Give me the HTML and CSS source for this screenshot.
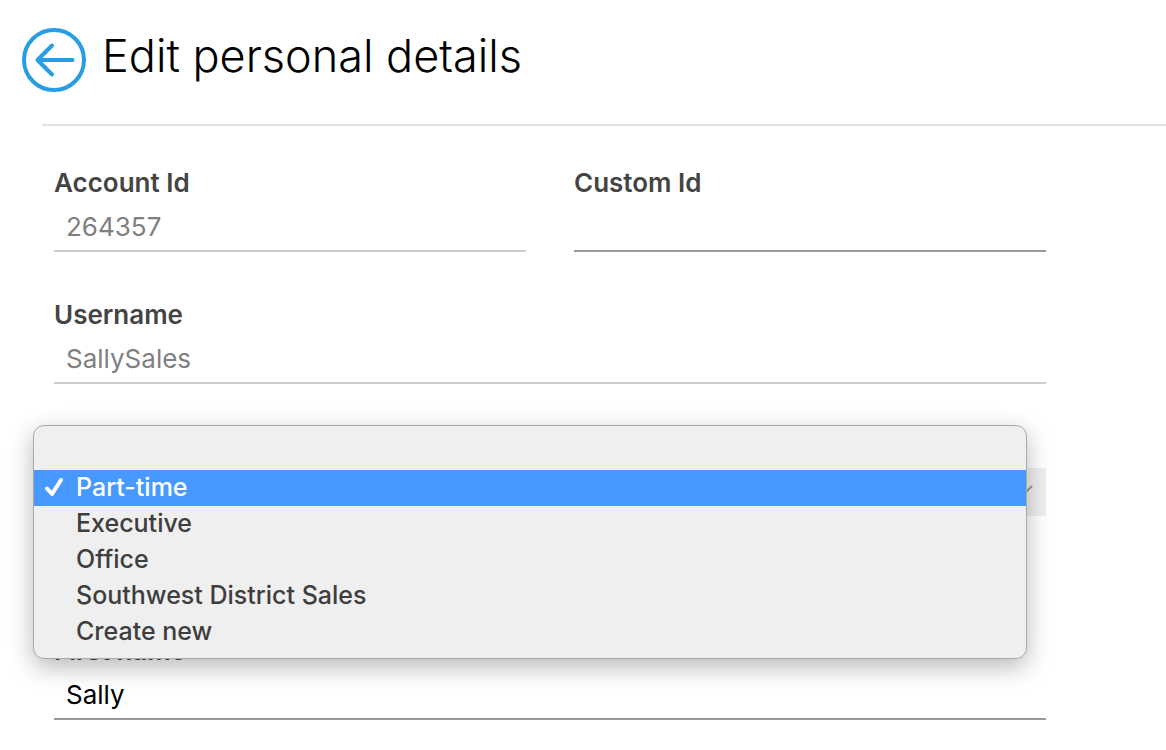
FILE: index.html
```html
<!DOCTYPE html>
<html lang="en">
<head>
<meta charset="utf-8">
<meta name="viewport" content="width=device-width, initial-scale=1">
<title>Edit personal details</title>
<link rel="stylesheet" href="styles.css">
</head>
<body>
<header class="page-header">
  <button class="back" type="button" aria-label="Back">
    <svg class="back-icon" viewBox="0 0 64 64" fill="none" stroke="currentColor" stroke-linecap="round" stroke-linejoin="round" aria-hidden="true">
      <circle cx="32" cy="32" r="30" stroke-width="4"/>
      <path d="M50.500 32H15.500M30 17.500L15.500 32L30 46.500" stroke-width="4"/>
    </svg>
  </button>
  <h1 class="title">Edit personal details</h1>
</header>
<hr class="divider">
<form class="form">
  <div class="field">
    <label class="label" for="account">Account Id</label>
    <input class="input" id="account" type="text" value="264357" disabled>
  </div>
  <div class="field">
    <label class="label" for="custom">Custom Id</label>
    <input class="input" id="custom" type="text">
  </div>
  <div class="field wide">
    <label class="label" for="username">Username</label>
    <input class="input" id="username" type="text" value="SallySales" disabled>
  </div>
  <div class="field wide field-select">
    <select class="select" aria-label="Group">
      <option selected></option>
      <option>Part-time</option>
      <option>Executive</option>
      <option>Office</option>
      <option>Southwest District Sales</option>
      <option>Create new</option>
    </select>
    <svg class="chevron" viewBox="0 0 16 10" fill="none" stroke="currentColor" stroke-width="2" aria-hidden="true"><path d="M2 2L8 8L14 2"/></svg>
    <ul class="menu" role="listbox" aria-label="Group">
      <li class="option" role="option"></li>
      <li class="option selected" role="option" aria-selected="true">
        <svg class="check" viewBox="0 0 20 20" fill="none" stroke="currentColor" stroke-width="4" stroke-linecap="round" stroke-linejoin="round" aria-hidden="true"><path d="M3 11.500L8 17L17 3"/></svg>
        Part-time
      </li>
      <li class="option" role="option">Executive</li>
      <li class="option" role="option">Office</li>
      <li class="option" role="option">Southwest District Sales</li>
      <li class="option" role="option">Create new</li>
    </ul>
  </div>
  <div class="field wide">
    <label class="label" for="first">First name</label>
    <input class="input" id="first" type="text" value="Sally">
  </div>
</form>
</body>
</html>
```
FILE: styles.css
```css
* {
  box-sizing: border-box;
}

body {
  margin: 0;
  background: #fff;
  color: #000;
  font-family: Inter, "Liberation Sans", sans-serif;
  font-size: 26px;
}

.page-header {
  display: flex;
  align-items: center;
  gap: 16px;
  padding: 28px 22px 32px;
}

.back {
  display: block;
  flex: none;
  width: 64px;
  height: 64px;
  padding: 0;
  border: 0;
  border-radius: 50%;
  background: none;
  color: #269de4;
  cursor: pointer;
}

.back-icon {
  display: block;
}

.title {
  margin: 0;
  padding-bottom: 8px;
  font-size: 45px;
  font-weight: 300;
  line-height: 56px;
}

.divider {
  height: 2px;
  margin: 0 0 0 42px;
  border: 0;
  background: #e2e2e2;
}

.form {
  display: grid;
  grid-template-columns: 1fr 1fr;
  gap: 48px;
  padding: 42px 120px 30px 54px;
}

.field {
  display: flex;
  flex-direction: column;
  gap: 6px;
  min-width: 0;
}

.wide {
  grid-column: 1 / -1;
}

.label {
  color: #444;
  font-weight: 600;
  line-height: 30px;
}

.input {
  width: 100%;
  height: 48px;
  padding: 0 12px 2px;
  border: 0;
  border-bottom: 2px solid #999;
  border-radius: 0;
  outline: 0;
  background: none;
  color: #000;
  font: inherit;
}

.input:disabled {
  border-bottom-color: #ccc;
  color: #808080;
}

.field-select {
  position: relative;
  padding-top: 36px;
  margin-bottom: 72px;
}

.select {
  appearance: none;
  width: 100%;
  height: 48px;
  padding: 0 36px 0 12px;
  border: 0;
  border-radius: 0;
  background: #efefef;
  color: #000;
  font: inherit;
}

.chevron {
  position: absolute;
  right: 12px;
  bottom: 22px;
  width: 16px;
  height: 10px;
  color: #999;
}

.menu {
  position: absolute;
  top: -7px;
  left: -21px;
  width: calc(100% + 2px);
  margin: 0;
  padding: 8px 0;
  overflow: hidden;
  list-style: none;
  border: 1px solid #aaa;
  border-radius: 11px;
  background: #efefef;
  box-shadow: 0 8px 24px rgba(0, 0, 0, 0.28);
  color: #3e3e3e;
  font-size: 25px;
  font-weight: 500;
}

.option {
  position: relative;
  height: 36px;
  padding-left: 42px;
  line-height: 34px;
}

.selected {
  background: #4799ff;
  color: #fff;
}

.check {
  position: absolute;
  top: 7px;
  left: 10px;
  width: 20px;
  height: 20px;
}
```
